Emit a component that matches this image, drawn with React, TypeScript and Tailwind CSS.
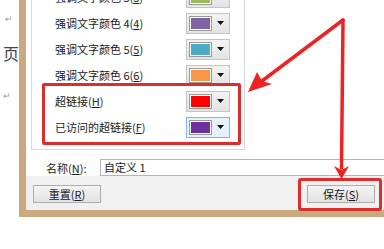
import React from "react";

const rows = [
  { label: "强调文字颜色 3", key: "3", color: "#9bbb59" },
  { label: "强调文字颜色 4", key: "4", color: "#8064a2" },
  { label: "强调文字颜色 5", key: "5", color: "#4bacc6" },
  { label: "强调文字颜色 6", key: "6", color: "#f79646" },
  { label: "超链接", key: "H", color: "#ff0000" },
  { label: "已访问的超链接", key: "F", color: "#7030a0", focus: true },
];

function Swatch({ color, focus }: { color: string; focus?: boolean }) {
  return (
    <div
      className={
        focus
          ? "flex items-center w-[44px] h-[21px] border border-[#7eb4ea] bg-[#e5f1fb] pl-[2px]"
          : "flex items-center w-[44px] h-[21px] border border-[#c4c4c4] bg-gradient-to-b from-[#f3f3f3] to-[#e3e3e3] pl-[2px]"
      }
    >
      <div className="w-[23px] h-[15px] border border-[#9a9a9a] bg-white p-[1px]">
        <div className="w-full h-full" style={{ backgroundColor: color }} />
      </div>
      <div className="flex-1 flex justify-center">
        <svg width="7" height="4" viewBox="0 0 7 4">
          <polygon points="0,0 7,0 3.5,4" fill="#111" />
        </svg>
      </div>
    </div>
  );
}

export default function App() {
  return (
    <div className="relative w-[384px] h-[249px] bg-white overflow-hidden font-['Noto_Sans_CJK_SC',sans-serif] text-[#1a1a1a]">
      <div className="flex h-[217px]">
        <div className="w-[19px] flex flex-col text-[#9a9a9a]">
          <div className="mt-[14px] ml-[5px] text-[9px] leading-[10px]">↵</div>
          <div className="mt-[19px] ml-[3px] text-[16px] leading-[20px] text-[#444]">页</div>
          <div className="mt-[28px] ml-[3px] text-[9px] leading-[10px]">↵</div>
        </div>
        <div className="flex-1 flex flex-col border-l-[7px] border-b-[7px] border-[#c9a97d] bg-white">
          <div className="mt-[-20px] ml-[5px] w-[214px] h-[170px] border border-[#d8d8d8] bg-white pt-[3px]">
            {rows.map((r) => (
              <div key={r.key} className="flex items-center h-[26px] pl-[23px]">
                <div className="w-[131px] text-[11px] leading-[14px] whitespace-nowrap">
                  {r.label}(<span className="underline">{r.key}</span>)
                </div>
                <Swatch color={r.color} focus={r.focus} />
              </div>
            ))}
          </div>
          <div className="mt-[9px] flex h-[17px] items-center">
            <div className="w-[74px] pl-[20px] text-[11px] leading-[14px] whitespace-nowrap">
              名称(<span className="underline">N</span>):
            </div>
            <div className="flex-1 h-full border border-r-0 border-[#b4b4b4] bg-white pl-[3px] text-[11px] leading-[15px]">
              自定义 1
            </div>
          </div>
          <div className="flex-1 bg-[#f0f0f0] flex justify-between items-start pt-[9px] pl-[7px] pr-[9px]">
            <div className="w-[68px] h-[18px] border border-[#adadad] bg-gradient-to-b from-[#f4f4f4] to-[#e2e2e2] flex items-center justify-center text-[11px] leading-[14px]">
              重置(<span className="underline">R</span>)
            </div>
            <div className="w-[68px] h-[18px] border border-[#adadad] bg-gradient-to-b from-[#f4f4f4] to-[#e2e2e2] flex items-center justify-center text-[11px] leading-[14px]">
              保存(<span className="underline">S</span>)
            </div>
          </div>
        </div>
      </div>

      {/* annotations */}
      <div className="absolute left-[42px] top-[83px] w-[199px] h-[62px] border-[3px] border-[#dd2c2c] rounded-[2px]" />
      <div className="absolute left-[298px] top-[178px] w-[84px] h-[33px] border-[3px] border-[#dd2c2c] rounded-[3px]" />
      <svg className="absolute inset-0" width="384" height="249" viewBox="0 0 384 249">
        <line x1="343" y1="20" x2="262" y2="81" stroke="#ee2222" strokeWidth="3.5" strokeLinecap="round" />
        <polygon points="248,92 257,72 262,81 272,84" fill="#ee2222" />
        <line x1="343" y1="20" x2="341.5" y2="168" stroke="#ee2222" strokeWidth="3.5" strokeLinecap="round" />
        <polygon points="334,166 341.5,170 349,166 341.5,179" fill="#ee2222" />
      </svg>
    </div>
  );
}
